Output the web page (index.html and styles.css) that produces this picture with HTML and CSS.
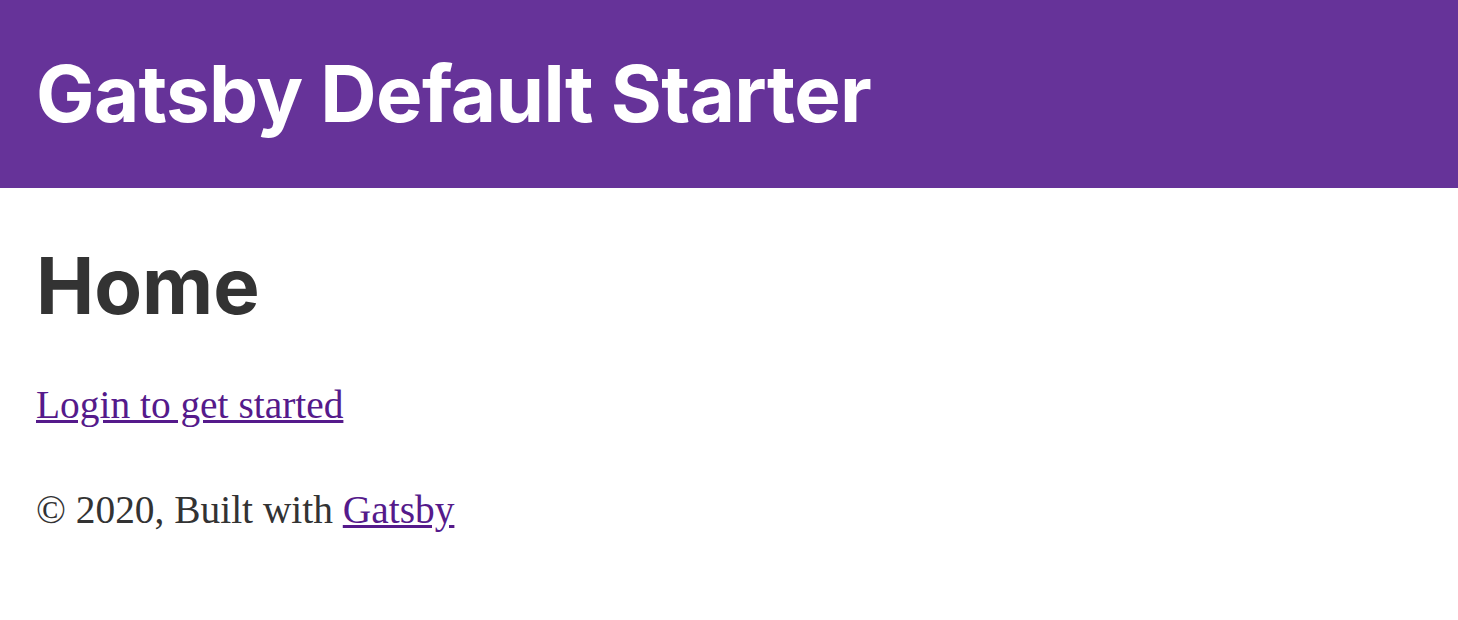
FILE: index.html
```html
<!DOCTYPE html>
<html>
<head>
<meta charset="utf-8">
<link rel="stylesheet" href="styles.css">
</head>
<body>
<header class="site-header">
  <h1 class="site-title"><a href="#">Gatsby Default Starter</a></h1>
</header>
<main class="content">
  <h1 class="page-title">Home</h1>
  <p class="intro"><a href="#">Login to get started</a></p>
  <footer class="site-footer">© 2020, Built with <a href="#">Gatsby</a></footer>
</main>
</body>
</html>
```
FILE: styles.css
```css
html, body {
  margin: 0;
  padding: 0;
  background: #fff;
}
body {
  font-family: "Liberation Serif", "DejaVu Serif", serif;
  color: #333;
}
.site-header {
  background: #663399;
  height: 188px;
  box-sizing: border-box;
  padding: 49px 36px 0;
}
.site-title {
  margin: 0;
  font-family: Inter, "Noto Sans", sans-serif;
  font-weight: 700;
  font-size: 78px;
  line-height: 90px;
  letter-spacing: -0.62px;
}
.site-title a {
  color: #fff;
  text-decoration: none;
}
.content {
  padding: 0 36px;
}
.page-title {
  margin: 0;
  padding-top: 53px;
  font-family: Inter, "Noto Sans", sans-serif;
  font-weight: 700;
  font-size: 78px;
  line-height: 90px;
  color: #333;
}
.intro {
  margin: 0;
  padding-top: 49px;
  font-size: 39.4px;
  line-height: 50px;
}
a {
  color: #551a8b;
}
.site-footer {
  padding-top: 55px;
  font-size: 39.4px;
  line-height: 50px;
}
```
